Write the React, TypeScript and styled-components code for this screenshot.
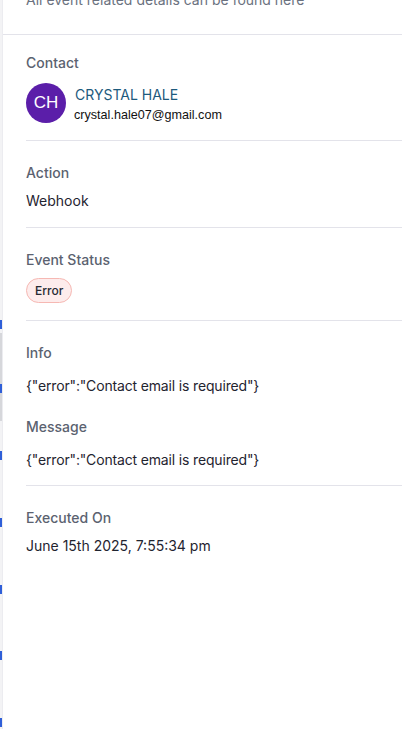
import React from "react";
import styled, { createGlobalStyle } from "styled-components";

const Global = createGlobalStyle`
  html, body { margin: 0; padding: 0; background: #ffffff; }
  body { font-family: Inter, "Noto Sans", sans-serif; -webkit-font-smoothing: antialiased; }
  #root { height: 729px; overflow: hidden; }
`;

const Page = styled.div`
  display: flex;
  height: 729px;
  overflow: hidden;
  background: #f4f4f6;
`;

const Backdrop = styled.div`
  position: relative;
  width: 2px;
  flex: 0 0 2px;
  background: #f3f3f5;
`;

const Mark = styled.span<{ $top: number }>`
  position: absolute;
  left: 0;
  top: ${(p) => p.$top}px;
  width: 2px;
  height: 9px;
  background: #2f5fd8;
`;

const Shade = styled.span<{ $top: number; $h: number }>`
  position: absolute;
  left: 0;
  top: ${(p) => p.$top}px;
  width: 2px;
  height: ${(p) => p.$h}px;
  background: #d6d7db;
`;

const Drawer = styled.aside`
  flex: 1;
  background: #ffffff;
  border-left: 1px solid #ececf0;
  display: flex;
  flex-direction: column;
`;

const Header = styled.header`
  margin-top: -10px;
  padding: 0 0 24px 23px;
  border-bottom: 1px solid #e3e3ea;
`;

const Subtitle = styled.p`
  margin: 0;
  font-size: 14px;
  line-height: 20px;
  color: #6b7280;
`;

const Body = styled.div`
  padding-left: 23px;
  display: flex;
  flex-direction: column;
`;

const Section = styled.section<{ $top?: number; $bottom?: number; $last?: boolean }>`
  padding: ${(p) => p.$top ?? 22}px 0 ${(p) => (p.$last ? 0 : p.$bottom ?? 16)}px;
  border-bottom: ${(p) => (p.$last ? "none" : "1px solid #e3e3ea")};
  display: flex;
  flex-direction: column;
`;

const Label = styled.div<{ $gap?: number }>`
  font-size: 14px;
  line-height: 20px;
  font-weight: 500;
  color: #5b6270;
  margin-top: ${(p) => p.$gap ?? 0}px;
`;

const Value = styled.div<{ $gap?: number; $tight?: boolean }>`
  font-size: 14px;
  line-height: 20px;
  color: #1f2430;
  margin-top: ${(p) => p.$gap ?? 8}px;
  letter-spacing: ${(p) => (p.$tight ? "-0.16px" : "0")};
`;

const ContactRow = styled.div`
  display: flex;
  align-items: flex-start;
  gap: 8px;
  margin-top: 10px;
`;

const Avatar = styled.div`
  width: 40px;
  height: 40px;
  border-radius: 50%;
  background: #5b1ea9;
  color: #ffffff;
  font-size: 17px;
  font-weight: 500;
  display: flex;
  align-items: center;
  justify-content: center;
  font-family: "Liberation Sans", Arial, sans-serif;
`;

const ContactInfo = styled.div`
  display: flex;
  flex-direction: column;
  padding-top: 2px;
`;

const Name = styled.div`
  font-size: 14px;
  line-height: 20px;
  color: #1d5a7d;
  margin-left: 1px;
`;

const Email = styled.div`
  font-size: 12.6px;
  line-height: 16px;
  color: #111111;
  margin-top: 2px;
  font-family: "Liberation Sans", Arial, sans-serif;
`;

const Badge = styled.span`
  align-self: flex-start;
  margin-top: 8px;
  height: 25px;
  padding: 0 8px;
  box-sizing: border-box;
  display: inline-flex;
  align-items: center;
  border-radius: 13px;
  border: 1px solid #f6b8b3;
  background: #fdecec;
  color: #262a33;
  font-size: 12px;
  font-weight: 500;
`;

const marks = [320, 384, 451, 518, 585, 651, 718];

export default function App() {
  return (
    <>
      <Global />
      <Page>
        <Backdrop>
          <Shade $top={333} $h={88} />
          {marks.map((t) => (
            <Mark key={t} $top={t} />
          ))}
        </Backdrop>
        <Drawer>
          <Header>
            <Subtitle>All event related details can be found here</Subtitle>
          </Header>
          <Body>
            <Section $top={18} $bottom={17}>
              <Label>Contact</Label>
              <ContactRow>
                <Avatar>CH</Avatar>
                <ContactInfo>
                  <Name>CRYSTAL HALE</Name>
                  <Email>crystal.hale07@gmail.com</Email>
                </ContactInfo>
              </ContactRow>
            </Section>
            <Section>
              <Label>Action</Label>
              <Value>Webhook</Value>
            </Section>
            <Section $bottom={17}>
              <Label>Event Status</Label>
              <Badge>Error</Badge>
            </Section>
            <Section $bottom={15}>
              <Label>Info</Label>
              <Value $gap={13} $tight>{'{"error":"Contact email is required"}'}</Value>
              <Label $gap={21}>Message</Label>
              <Value $gap={13} $tight>{'{"error":"Contact email is required"}'}</Value>
            </Section>
            <Section $last>
              <Label>Executed On</Label>
              <Value>June 15th 2025, 7:55:34 pm</Value>
            </Section>
          </Body>
        </Drawer>
      </Page>
    </>
  );
}
